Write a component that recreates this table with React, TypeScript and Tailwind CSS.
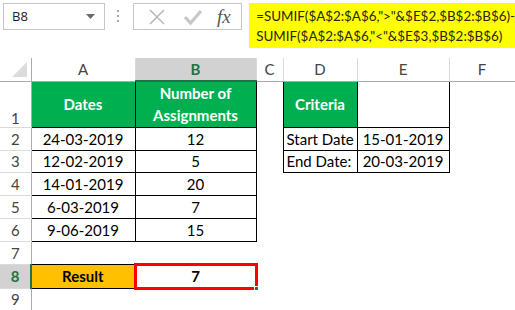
import React from "react";

const cellFont = "font-['Lato','Liberation_Sans',sans-serif] text-[15px] leading-[18px] text-black";
const colHead =
	"h-[23px] p-0 text-center align-middle font-['Lato','Liberation_Sans',sans-serif] text-[15px] leading-[18px] text-[#444] border-r border-b border-r-[#dadada] border-b-[#ababab]";
const rowHeadBase =
	"p-0 text-center font-['Lato','Liberation_Sans',sans-serif] text-[15px] leading-[18px] text-[#444] border-r border-b border-r-[#ababab] border-b-[#dadada]";
const rowHead = rowHeadBase + " align-middle";
const boxed = "p-0 text-center align-middle border border-black " + cellFont;
const greenHead =
	"p-0 text-center align-middle border border-black bg-[#00b050] text-white font-bold leading-[22px] font-['Lato','Liberation_Sans',sans-serif] text-[15px]";

const rows = [
	["24-03-2019", "12"],
	["12-02-2019", "5"],
	["14-01-2019", "20"],
	["6-03-2019", "7"],
	["9-06-2019", "15"],
];

// row 3 is a pixel shorter than the others
const rowHeights = ["h-[23px]", "h-[22px]", "h-[23px]", "h-[23px]", "h-[23px]"];

function NameBox() {
	return (
		<div className="flex h-[27px] w-[102px] items-center justify-between border border-[#c6c6c6] bg-white pl-[8px] pr-[9px]">
			<span className="font-['Open_Sans',sans-serif] text-[13px] text-[#222]">B8</span>
			<svg width="9" height="5" viewBox="0 0 9 5">
				<path d="M0 0 H9 L4.5 5 Z" fill="#6b6b6b" />
			</svg>
		</div>
	);
}

function FormulaButtons() {
	return (
		<div className="flex h-[27px] w-[110px] items-center border border-[#c6c6c6] bg-white pl-[14px]">
			<svg width="18" height="18" viewBox="0 0 18 18">
				<path d="M2 2 L16 16 M16 2 L2 16" stroke="#b9b9b9" strokeWidth="1.6" fill="none" />
			</svg>
			<svg width="20" height="18" viewBox="0 0 20 18" className="ml-[17px]">
				<path d="M2 9 L7.5 15 L18 3" stroke="#c8c8c8" strokeWidth="3.2" fill="none" />
			</svg>
			<span className="ml-[14px] font-['Liberation_Serif',serif] text-[19px] italic leading-none text-[#555]">
				fx
			</span>
		</div>
	);
}

export default function App() {
	return (
		<div className="h-[310px] w-[515px] overflow-hidden bg-white">
			{/* formula bar */}
			<div className="flex h-[58px] items-start pt-[3px]">
				<div className="ml-[3px]">
					<NameBox />
				</div>
				<div className="ml-[12px] mr-[14px] mt-[7px] flex flex-col gap-[3px]">
					<span className="h-[2px] w-[2px] bg-[#a8a8a8]" />
					<span className="h-[2px] w-[2px] bg-[#a8a8a8]" />
					<span className="h-[2px] w-[2px] bg-[#a8a8a8]" />
				</div>
				<FormulaButtons />
				<div className="ml-[7px] flex h-[45px] flex-1 flex-col justify-center whitespace-nowrap bg-[#ffff00] pl-[7px] font-['Lato','Liberation_Sans',sans-serif] text-[13.4px] leading-[20px] text-[#262617]">
					<div>=SUMIF($A$2:$A$6,"&gt;"&amp;$E$2,$B$2:$B$6)-</div>
					<div>SUMIF($A$2:$A$6,"&lt;"&amp;$E$3,$B$2:$B$6)</div>
				</div>
			</div>

			{/* sheet grid */}
			<table className="w-[515px] table-fixed border-collapse">
				<colgroup>
					<col className="w-[31px]" />
					<col className="w-[104px]" />
					<col className="w-[121px]" />
					<col className="w-[27px]" />
					<col className="w-[74px]" />
					<col className="w-[92px]" />
					<col className="w-[66px]" />
				</colgroup>
				<tbody>
					<tr className="h-[23px]">
						<td className="relative h-[23px] p-0 border-r border-b border-r-[#ababab] border-b-[#ababab]">
							<svg width="15" height="15" viewBox="0 0 15 15" className="absolute bottom-[4px] right-[4px]">
								<path d="M15 0 V15 H0 Z" fill="#dcdcdc" />
							</svg>
						</td>
						<td className={colHead}>A</td>
						<td className="h-[23px] p-0 text-center align-middle font-['Lato','Liberation_Sans',sans-serif] text-[15px] leading-[18px] font-bold text-[#217346] bg-[#d2d2d2] border-r border-r-[#dadada] border-b-2 border-b-[#217346]">
							B
						</td>
						<td className={colHead}>C</td>
						<td className={colHead}>D</td>
						<td className={colHead}>E</td>
						<td className={colHead}>F</td>
					</tr>
					<tr className="h-[46px]">
						<td className={rowHeadBase + " align-bottom pb-0"}>1</td>
						<td className={greenHead}>Dates</td>
						<td className={greenHead}>
							Number of
							<br />
							Assignments
						</td>
						<td className="p-0" />
						<td className={greenHead}>Criteria</td>
						<td className="p-0 border border-black" />
						<td className="p-0" />
					</tr>
					{rows.map((r, i) => (
						<tr key={i} className={rowHeights[i]}>
							<td className={rowHead}>{i + 2}</td>
							<td className={boxed}>{r[0]}</td>
							<td className={boxed}>{r[1]}</td>
							<td className="p-0" />
							{i === 0 && <td className={boxed + " text-left pl-[3px] whitespace-nowrap"}>Start Date</td>}
							{i === 0 && <td className={boxed}>15-01-2019</td>}
							{i === 1 && <td className={boxed + " text-left pl-[3px] whitespace-nowrap"}>End Date:</td>}
							{i === 1 && <td className={boxed}>20-03-2019</td>}
							{i > 1 && <td className="p-0" />}
							{i > 1 && <td className="p-0" />}
							<td className="p-0" />
						</tr>
					))}
					<tr className="h-[23px]">
						<td className={rowHead}>7</td>
						<td className="p-0" colSpan={6} />
					</tr>
					<tr className="h-[24px]">
						<td className="p-0 text-center align-middle font-['Lato','Liberation_Sans',sans-serif] text-[15px] leading-[18px] font-bold text-[#217346] bg-[#d2d2d2] border-b border-b-[#dadada] border-r-2 border-r-[#217346]">
							8
						</td>
						<td className="p-0 text-center align-middle border border-black bg-[#ffc000] font-bold font-['Lato','Liberation_Sans',sans-serif] text-[15px] leading-[18px] text-black">
							Result
						</td>
						<td className="relative p-0 text-center align-middle border-[3px] border-[#ff0000] bg-white font-bold font-['Lato','Liberation_Sans',sans-serif] text-[15px] leading-[18px] text-black">
							7
							<span className="absolute -bottom-[4px] -right-[4px] h-[5px] w-[5px] bg-[#217346] border border-white" />
						</td>
						<td className="p-0" colSpan={4} />
					</tr>
					<tr className="h-[22px]">
						<td className={rowHead}>9</td>
						<td className="p-0" colSpan={6} />
					</tr>
				</tbody>
			</table>
		</div>
	);
}
